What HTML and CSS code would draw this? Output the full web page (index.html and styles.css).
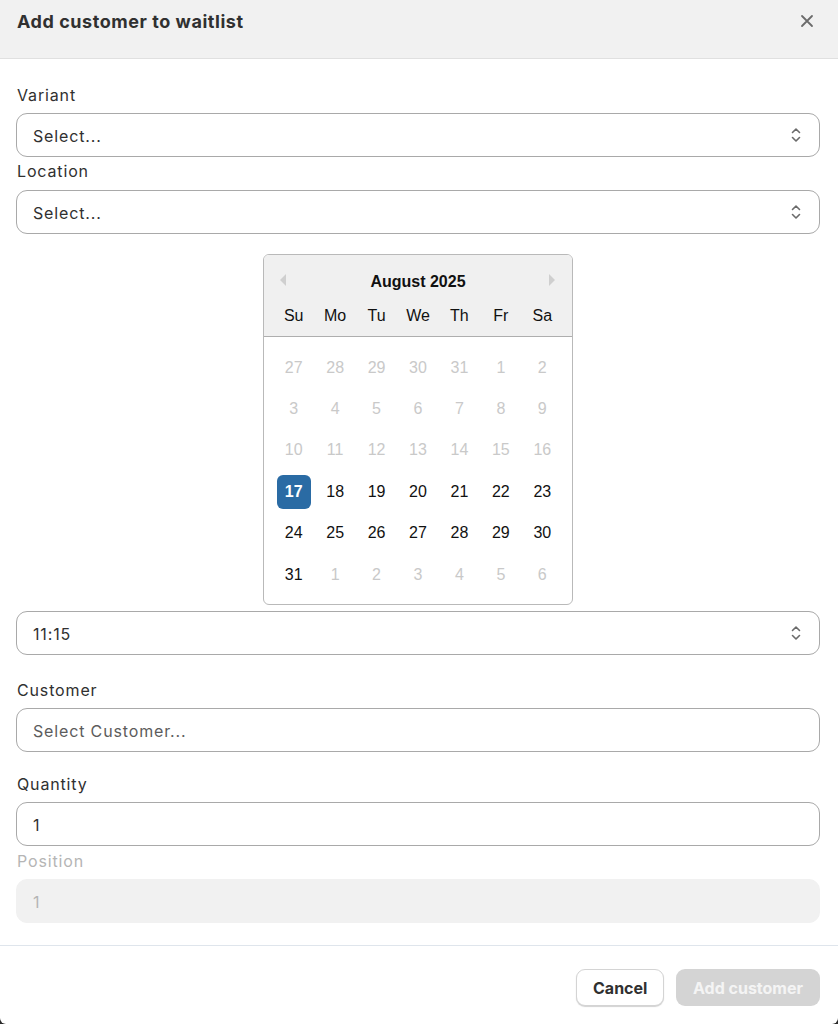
FILE: index.html
```html
<!DOCTYPE html>
<html lang="en">
<head>
<meta charset="utf-8">
<title>Add customer to waitlist</title>
<link rel="stylesheet" href="styles.css">
</head>
<body>
<div class="modal">
  <header class="modal-header">
    <h1 class="modal-title">Add customer to waitlist</h1>
    <button class="close-btn" aria-label="Close">
      <svg width="14" height="14" viewBox="0 0 14 14"><path d="M2 2 L12 12 M12 2 L2 12" stroke="#6b6b6b" stroke-width="1.8" stroke-linecap="round" fill="none"/></svg>
    </button>
  </header>

  <main class="modal-body">
    <div class="field">
      <label class="label">Variant</label>
      <div class="control select"><span>Select...</span>
        <svg class="chev" width="12" height="18" viewBox="0 0 12 18"><path d="M2.5 6.5 L6 3 L9.5 6.5 M2.5 11.5 L6 15 L9.5 11.5" stroke="#6b6b6b" stroke-width="1.6" fill="none" stroke-linecap="round" stroke-linejoin="round"/></svg>
      </div>
    </div>
    <div class="field field-tight">
      <label class="label">Location</label>
      <div class="control select"><span>Select...</span>
        <svg class="chev" width="12" height="18" viewBox="0 0 12 18"><path d="M2.5 6.5 L6 3 L9.5 6.5 M2.5 11.5 L6 15 L9.5 11.5" stroke="#6b6b6b" stroke-width="1.6" fill="none" stroke-linecap="round" stroke-linejoin="round"/></svg>
      </div>
    </div>

    <div class="cal-wrap">
      <div class="calendar">
        <div class="cal-head">
          <div class="cal-month">
            <svg class="nav nav-prev" width="8" height="12" viewBox="0 0 8 12"><path d="M7 0 L1 6 L7 12 Z" fill="#cfcfcf"/></svg>
            <span>August 2025</span>
            <svg class="nav nav-next" width="8" height="12" viewBox="0 0 8 12"><path d="M1 0 L7 6 L1 12 Z" fill="#cfcfcf"/></svg>
          </div>
          <div class="cal-grid cal-dow">
            <span>Su</span><span>Mo</span><span>Tu</span><span>We</span><span>Th</span><span>Fr</span><span>Sa</span>
          </div>
        </div>
        <div class="cal-grid cal-days">
          <span class="muted">27</span><span class="muted">28</span><span class="muted">29</span><span class="muted">30</span><span class="muted">31</span><span class="muted">1</span><span class="muted">2</span>
          <span class="muted">3</span><span class="muted">4</span><span class="muted">5</span><span class="muted">6</span><span class="muted">7</span><span class="muted">8</span><span class="muted">9</span>
          <span class="muted">10</span><span class="muted">11</span><span class="muted">12</span><span class="muted">13</span><span class="muted">14</span><span class="muted">15</span><span class="muted">16</span>
          <span><b class="sel">17</b></span><span>18</span><span>19</span><span>20</span><span>21</span><span>22</span><span>23</span>
          <span>24</span><span>25</span><span>26</span><span>27</span><span>28</span><span>29</span><span>30</span>
          <span>31</span><span class="muted">1</span><span class="muted">2</span><span class="muted">3</span><span class="muted">4</span><span class="muted">5</span><span class="muted">6</span>
        </div>
      </div>
    </div>

    <div class="field field-time">
      <div class="control select"><span>11:15</span>
        <svg class="chev" width="12" height="18" viewBox="0 0 12 18"><path d="M2.5 6.5 L6 3 L9.5 6.5 M2.5 11.5 L6 15 L9.5 11.5" stroke="#6b6b6b" stroke-width="1.6" fill="none" stroke-linecap="round" stroke-linejoin="round"/></svg>
      </div>
    </div>

    <div class="field field-customer">
      <label class="label">Customer</label>
      <div class="control"><span class="placeholder">Select Customer...</span></div>
    </div>

    <div class="field field-qty">
      <label class="label">Quantity</label>
      <div class="control"><span>1</span></div>
    </div>

    <div class="field field-pos">
      <label class="label label-disabled">Position</label>
      <div class="control control-disabled"><span>1</span></div>
    </div>
  </main>

  <footer class="modal-footer">
    <button class="btn btn-secondary">Cancel</button>
    <button class="btn btn-primary-disabled">Add customer</button>
  </footer>
</div>
</body>
</html>
```

FILE: styles.css
```css
* { box-sizing: border-box; }

html, body {
  margin: 0;
  padding: 0;
  height: 100%;
}

body {
  background: #2a2a2a;
  font-family: "Inter", "Noto Sans", sans-serif;
  color: #303030;
}

.modal {
  height: 1024px;
  background: #ffffff;
  border-radius: 0 0 6px 6px;
  display: flex;
  flex-direction: column;
  overflow: hidden;
}

.modal-header {
  height: 59px;
  background: #f1f1f1;
  border-bottom: 1px solid #e0e0e0;
  display: flex;
  align-items: flex-start;
  justify-content: space-between;
  padding: 10px 24px 0 17px;
}

.modal-title {
  margin: 0;
  font-size: 18px;
  line-height: 24px;
  font-weight: 700;
  color: #303030;
  letter-spacing: 0.55px;
}

.close-btn {
  border: 0;
  background: transparent;
  padding: 0;
  margin-top: 4px;
  width: 14px;
  height: 14px;
  display: flex;
}

.modal-body {
  padding: 26px 18px 0 16px;
  display: flex;
  flex-direction: column;
  flex: 1;
  border-bottom: 1px solid #dfe5ec;
}

.field {
  display: flex;
  flex-direction: column;
}

.label {
  font-size: 16px;
  line-height: 20px;
  margin-bottom: 8px;
  color: #303030;
  letter-spacing: 0.85px;
  padding-left: 1px;
}

.label-disabled { color: #b5b5b5; }

.field-tight { margin-top: 4px; }
.field-tight .label { margin-bottom: 9px; }

.control {
  height: 44px;
  border: 1px solid #a9a9a9;
  border-radius: 11px;
  display: flex;
  align-items: center;
  justify-content: space-between;
  padding: 2px 17px 0 16px;
  font-size: 16px;
  color: #303030;
  background: #fff;
  letter-spacing: 0.85px;
}

.select { padding-top: 0; }
.select span { padding-top: 2px; }

.placeholder { color: #5c5c5c; }

.control-disabled {
  background: #f1f1f1;
  border-color: #f1f1f1;
  color: #b5b5b5;
}

.chev { display: block; }

.cal-wrap {
  display: flex;
  justify-content: center;
  margin-top: 20px;
}

.calendar {
  width: 310px;
  border: 1px solid #b9b9b9;
  border-radius: 6px;
  overflow: hidden;
  font-family: "Liberation Sans", Arial, sans-serif;
  background: #fff;
  letter-spacing: 0;
}

.cal-head {
  background: #f0f0f0;
  border-bottom: 1px solid #aeaeae;
  padding: 11px 9px 2px;
}

.cal-month {
  position: relative;
  height: 32px;
  display: flex;
  align-items: center;
  justify-content: center;
  font-size: 16px;
  font-weight: 700;
  color: #111;
}

.nav { position: absolute; top: 8px; }
.nav-prev { left: 6px; }
.nav-next { right: 7px; }

.cal-grid {
  display: grid;
  grid-template-columns: repeat(7, 1fr);
}

.cal-dow span {
  height: 36px;
  display: flex;
  align-items: center;
  justify-content: center;
  font-size: 16px;
  color: #111;
}

.cal-days {
  padding: 10px 9px 9px;
  grid-auto-rows: 41.4px;
}

.cal-days span {
  display: flex;
  align-items: center;
  justify-content: center;
  font-size: 16px;
  color: #111;
}

.cal-days span.muted { color: #c9c9c9; }

.sel {
  width: 34px;
  height: 34px;
  border-radius: 6px;
  background: #2a6ba4;
  color: #fff;
  display: flex;
  align-items: center;
  justify-content: center;
  font-weight: 700;
}

.field-time { margin-top: 6px; }
.field-customer { margin-top: 25px; }
.field-qty { margin-top: 22px; }
.field-pos { margin-top: 5px; }

.modal-footer {
  height: 78px;
  display: flex;
  justify-content: flex-end;
  align-items: flex-start;
  gap: 12px;
  padding: 23px 18px 0 16px;
}

.btn {
  height: 37px;
  border-radius: 9px;
  font-family: "Inter", "Noto Sans", sans-serif;
  font-size: 16px;
  font-weight: 700;
  padding: 0 16px;
}

.btn-secondary {
  background: #fff;
  border: 1px solid #d4d4d4;
  color: #303030;
  box-shadow: 0 1px 1px rgba(0,0,0,0.18);
  width: 88px;
}

.btn-primary-disabled {
  background: #d4d4d4;
  border: 0;
  color: #f4f4f4;
  width: 144px;
}
```
